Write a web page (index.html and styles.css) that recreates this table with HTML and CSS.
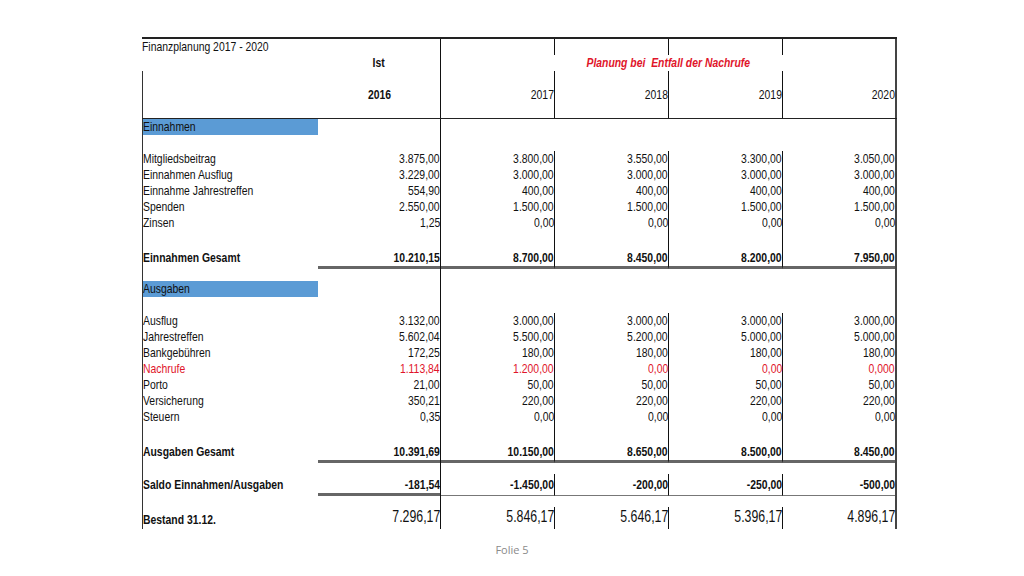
FILE: index.html
```html
<!DOCTYPE html>
<html lang="de">
<head>
<meta charset="utf-8">
<title>Finanzplanung 2017 - 2020</title>
<link rel="stylesheet" href="styles.css">
</head>
<body>
<div class="slide">
  <div class="sheet">
    <div class="row v top"><div class="c"><span class="t">Finanzplanung 2017 - 2020</span></div><div class="c"></div><div class="c"></div><div class="c"></div><div class="c"></div><div class="c"></div></div>
    <div class="row top"><div class="c"></div><div class="c bold center"><span class="t">Ist</span></div><div class="c plan"><span class="t">Planung bei  Entfall der Nachrufe</span></div></div>
    <div class="row v"><div class="c"></div><div class="c"></div><div class="c"></div><div class="c"></div><div class="c"></div><div class="c"></div></div>
    <div class="row v"><div class="c"></div><div class="c bold center"><span class="t">2016</span></div><div class="c"><span class="t">2017</span></div><div class="c"><span class="t">2018</span></div><div class="c"><span class="t">2019</span></div><div class="c"><span class="t">2020</span></div></div>
    <div class="row v hend"><div class="c"></div><div class="c"></div><div class="c"></div><div class="c"></div><div class="c"></div><div class="c"></div></div>

    <div class="row"><div class="c band"><span class="t">Einnahmen</span></div><div class="c"></div><div class="c"></div><div class="c"></div><div class="c"></div><div class="c"></div></div>
    <div class="row"><div class="c"></div><div class="c"></div><div class="c"></div><div class="c"></div><div class="c"></div><div class="c"></div></div>
    <div class="row v"><div class="c"><span class="t">Mitgliedsbeitrag</span></div><div class="c"><span class="t">3.875,00</span></div><div class="c"><span class="t">3.800,00</span></div><div class="c"><span class="t">3.550,00</span></div><div class="c"><span class="t">3.300,00</span></div><div class="c"><span class="t">3.050,00</span></div></div>
    <div class="row v"><div class="c"><span class="t">Einnahmen Ausflug</span></div><div class="c"><span class="t">3.229,00</span></div><div class="c"><span class="t">3.000,00</span></div><div class="c"><span class="t">3.000,00</span></div><div class="c"><span class="t">3.000,00</span></div><div class="c"><span class="t">3.000,00</span></div></div>
    <div class="row v"><div class="c"><span class="t">Einnahme Jahrestreffen</span></div><div class="c"><span class="t">554,90</span></div><div class="c"><span class="t">400,00</span></div><div class="c"><span class="t">400,00</span></div><div class="c"><span class="t">400,00</span></div><div class="c"><span class="t">400,00</span></div></div>
    <div class="row v"><div class="c"><span class="t">Spenden</span></div><div class="c"><span class="t">2.550,00</span></div><div class="c"><span class="t">1.500,00</span></div><div class="c"><span class="t">1.500,00</span></div><div class="c"><span class="t">1.500,00</span></div><div class="c"><span class="t">1.500,00</span></div></div>
    <div class="row v"><div class="c"><span class="t">Zinsen</span></div><div class="c"><span class="t">1,25</span></div><div class="c"><span class="t">0,00</span></div><div class="c"><span class="t">0,00</span></div><div class="c"><span class="t">0,00</span></div><div class="c"><span class="t">0,00</span></div></div>
    <div class="row v"><div class="c"></div><div class="c"></div><div class="c"></div><div class="c"></div><div class="c"></div><div class="c"></div></div>
    <div class="row v total"><div class="c"><span class="t">Einnahmen Gesamt</span></div><div class="c"><span class="t">10.210,15</span></div><div class="c"><span class="t">8.700,00</span></div><div class="c"><span class="t">8.450,00</span></div><div class="c"><span class="t">8.200,00</span></div><div class="c"><span class="t">7.950,00</span></div></div>
    <div class="row gap15"><div class="c"></div><div class="c"></div><div class="c"></div><div class="c"></div><div class="c"></div><div class="c"></div></div>

    <div class="row"><div class="c band"><span class="t">Ausgaben</span></div><div class="c"></div><div class="c"></div><div class="c"></div><div class="c"></div><div class="c"></div></div>
    <div class="row"><div class="c"></div><div class="c"></div><div class="c"></div><div class="c"></div><div class="c"></div><div class="c"></div></div>
    <div class="row v"><div class="c"><span class="t">Ausflug</span></div><div class="c"><span class="t">3.132,00</span></div><div class="c"><span class="t">3.000,00</span></div><div class="c"><span class="t">3.000,00</span></div><div class="c"><span class="t">3.000,00</span></div><div class="c"><span class="t">3.000,00</span></div></div>
    <div class="row v"><div class="c"><span class="t">Jahrestreffen</span></div><div class="c"><span class="t">5.602,04</span></div><div class="c"><span class="t">5.500,00</span></div><div class="c"><span class="t">5.200,00</span></div><div class="c"><span class="t">5.000,00</span></div><div class="c"><span class="t">5.000,00</span></div></div>
    <div class="row v"><div class="c"><span class="t">Bankgebühren</span></div><div class="c"><span class="t">172,25</span></div><div class="c"><span class="t">180,00</span></div><div class="c"><span class="t">180,00</span></div><div class="c"><span class="t">180,00</span></div><div class="c"><span class="t">180,00</span></div></div>
    <div class="row v red"><div class="c"><span class="t">Nachrufe</span></div><div class="c"><span class="t">1.113,84</span></div><div class="c"><span class="t">1.200,00</span></div><div class="c"><span class="t">0,00</span></div><div class="c"><span class="t">0,00</span></div><div class="c"><span class="t">0,000</span></div></div>
    <div class="row v"><div class="c"><span class="t">Porto</span></div><div class="c"><span class="t">21,00</span></div><div class="c"><span class="t">50,00</span></div><div class="c"><span class="t">50,00</span></div><div class="c"><span class="t">50,00</span></div><div class="c"><span class="t">50,00</span></div></div>
    <div class="row v"><div class="c"><span class="t">Versicherung</span></div><div class="c"><span class="t">350,21</span></div><div class="c"><span class="t">220,00</span></div><div class="c"><span class="t">220,00</span></div><div class="c"><span class="t">220,00</span></div><div class="c"><span class="t">220,00</span></div></div>
    <div class="row v"><div class="c"><span class="t">Steuern</span></div><div class="c"><span class="t">0,35</span></div><div class="c"><span class="t">0,00</span></div><div class="c"><span class="t">0,00</span></div><div class="c"><span class="t">0,00</span></div><div class="c"><span class="t">0,00</span></div></div>
    <div class="row v"><div class="c"></div><div class="c"></div><div class="c"></div><div class="c"></div><div class="c"></div><div class="c"></div></div>
    <div class="row v total"><div class="c"><span class="t">Ausgaben Gesamt</span></div><div class="c"><span class="t">10.391,69</span></div><div class="c"><span class="t">10.150,00</span></div><div class="c"><span class="t">8.650,00</span></div><div class="c"><span class="t">8.500,00</span></div><div class="c"><span class="t">8.450,00</span></div></div>
    <div class="row gap14"><div class="c"></div><div class="c"></div><div class="c"></div><div class="c"></div><div class="c"></div><div class="c"></div></div>
    <div class="row v saldo"><div class="c"><span class="t">Saldo Einnahmen/Ausgaben</span></div><div class="c"><span class="t">-181,54</span></div><div class="c"><span class="t">-1.450,00</span></div><div class="c"><span class="t">-200,00</span></div><div class="c"><span class="t">-250,00</span></div><div class="c"><span class="t">-500,00</span></div></div>
    <div class="row gap14"><div class="c"></div><div class="c"></div><div class="c"></div><div class="c"></div><div class="c"></div><div class="c"></div></div>
    <div class="row v bestand"><div class="c"><span class="t">Bestand 31.12.</span></div><div class="c"><span class="t">7.296,17</span></div><div class="c"><span class="t">5.846,17</span></div><div class="c"><span class="t">5.646,17</span></div><div class="c"><span class="t">5.396,17</span></div><div class="c"><span class="t">4.896,17</span></div></div>
  </div>
  <div class="foot">Folie 5</div>
</div>
</body>
</html>
```

FILE: styles.css
```css
html, body {
  margin: 0;
  padding: 0;
  background: #ffffff;
}

.slide {
  width: 1024px;
  height: 576px;
  box-sizing: border-box;
  padding-top: 37px;
  overflow: hidden;
  font-family: "Liberation Sans", Arial, sans-serif;
  font-size: 13px;
  color: #111111;
}

.sheet {
  width: 755px;
  margin-left: 142px;
  border-top: 2px solid #222222;
}

.row {
  display: grid;
  grid-template-columns: 176px 123px 114px 114px 114px 114px;
  height: 16px;
}

.c {
  box-sizing: border-box;
  text-align: right;
  line-height: 16px;
  white-space: nowrap;
  min-width: 0;
}

/* condensed (Arial Narrow-like) glyphs */
.t {
  display: inline-block;
  transform: scaleX(0.8);
  transform-origin: right center;
}

.row .c:first-child {
  text-align: left;
  border-left: 1px solid #333333;
}

.row .c:first-child .t {
  transform-origin: left center;
}

.row.top .c:first-child {
  border-left: 0;
}

.row .c:nth-child(2) {
  border-right: 1px solid #111111;
}

.row .c:last-child {
  border-right: 2px solid #444444;
}

.row.v .c:nth-child(3),
.row.v .c:nth-child(4),
.row.v .c:nth-child(5) {
  border-right: 1px solid #111111;
}

.bold {
  font-weight: 700;
}

.row .center {
  text-align: center;
}

.row .center .t {
  transform-origin: center center;
}

.plan {
  grid-column: span 4;
  text-align: center;
  white-space: pre;
  color: #e0142a;
  font-weight: 700;
  font-style: italic;
}

.plan .t {
  transform-origin: center center;
}

.hend {
  border-bottom: 1px solid #222222;
  box-sizing: border-box;
}

.band {
  background: #5b9bd5;
}

.red .c {
  color: #e0142a;
}

.total,
.saldo {
  height: 19px;
}

.total .c,
.saldo .c {
  padding-top: 3px;
  font-weight: 700;
}

.total .c:nth-child(n+2) {
  border-bottom: 3px solid #666666;
}

.saldo .c:nth-child(2) {
  border-bottom: 3px solid #666666;
}

.saldo .c:nth-child(n+3) {
  border-bottom: 1px solid #777777;
}

.gap15 {
  height: 15px;
}

.gap14 {
  height: 14px;
}

.bestand {
  height: 20px;
}

.bestand .c {
  font-size: 16px;
  line-height: 20px;
}

.bestand .c .t {
  transform: scaleX(0.77);
}

.bestand .c:first-child {
  font-size: 13px;
  font-weight: 700;
  line-height: 18px;
  padding-top: 4px;
}

.bestand .c:first-child .t {
  transform: scaleX(0.8);
}

.foot {
  margin-top: 15px;
  text-align: center;
  font-family: "Open Sans", "Noto Sans", sans-serif;
  font-size: 11px;
  line-height: 16px;
  color: #8a8a8a;
}
```
